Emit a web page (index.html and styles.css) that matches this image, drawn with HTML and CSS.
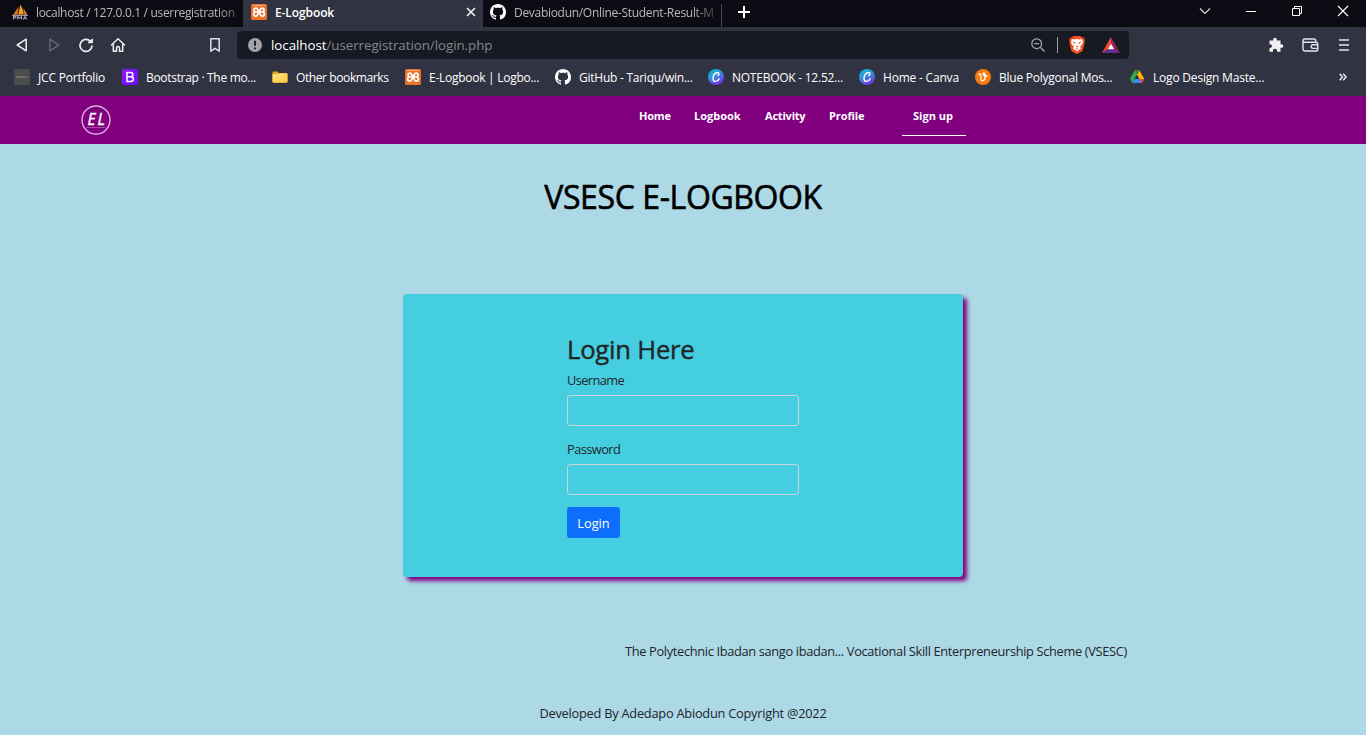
FILE: index.html
```html
<!DOCTYPE html>
<html lang="en">
<head>
<meta charset="utf-8">
<title>E-Logbook</title>
<link rel="stylesheet" href="styles.css">
</head>
<body>
<svg class="defs" width="0" height="0" aria-hidden="true">
  <defs>
    <linearGradient id="canva-fill" x1="0.2" y1="0" x2="0.7" y2="1">
      <stop offset="0" stop-color="#00c4cc"/><stop offset="0.5" stop-color="#3e84df"/><stop offset="1" stop-color="#7d2ae8"/>
    </linearGradient>
    <linearGradient id="boot-fill" x1="0" y1="0" x2="1" y2="1">
      <stop offset="0" stop-color="#9013fe"/><stop offset="1" stop-color="#6610f2"/>
    </linearGradient>
    <linearGradient id="folder-fill" x1="0" y1="0" x2="1" y2="1">
      <stop offset="0" stop-color="#ffe384"/><stop offset="1" stop-color="#fbcb3e"/>
    </linearGradient>
    <symbol id="xampp" viewBox="0 0 16 16">
      <rect width="16" height="16" rx="1.6" fill="#e9712a"/>
      <path d="M2 1.500h12" stroke="#f6c3a4" stroke-width=".8" stroke-dasharray="1.200 .6 8.400 .6"/>
      <path d="M5.400 4.200C3.800 4.200 3 5 3 6.100S3.700 8 4.600 8C3.600 8 2.600 8.700 2.600 10s1 2.200 2.100 2.200 1.600-.6 1.900-1.500l2.800-5.200c.4-.8.800-1.300 1.700-1.300 1.300 0 1.900.9 1.900 1.900S12.300 8 11.400 8c1 0 2 .7 2 2s-1 2.200-2.100 2.200-1.600-.6-1.900-1.500L6.600 5.500c-.3-.8-.6-1.300-1.200-1.300zM4.600 8h6.800" fill="none" stroke="#fff" stroke-width="1.700" stroke-linejoin="round"/>
    </symbol>
    <symbol id="github" viewBox="0 0 16 16">
      <path fill="#fff" d="M8 0C3.580 0 0 3.580 0 8c0 3.540 2.290 6.530 5.470 7.590.4.070.55-.17.55-.38 0-.19-.01-.82-.01-1.490-2.010.37-2.530-.49-2.690-.94-.09-.23-.48-.94-.82-1.130-.28-.15-.68-.52-.01-.53.63-.01 1.080.58 1.230.82.72 1.210 1.870.87 2.330.66.070-.52.280-.87.510-1.070-1.780-.2-3.640-.89-3.640-3.950 0-.87.310-1.590.82-2.150-.08-.2-.36-1.020.08-2.120 0 0 .67-.21 2.200.82.640-.18 1.320-.27 2-.27s1.360.09 2 .27c1.530-1.040 2.200-.82 2.200-.82.44 1.100.16 1.920.08 2.120.51.56.82 1.270.82 2.150 0 3.070-1.870 3.750-3.650 3.950.29.25.54.73.54 1.480 0 1.070-.01 1.930-.01 2.200 0 .21.15.46.55.38A8.010 8.010 0 0 0 16 8c0-4.420-3.580-8-8-8z"/>
    </symbol>
    <symbol id="canva" viewBox="0 0 16 16">
      <circle cx="8" cy="8" r="8" fill="url(#canva-fill)"/>
      <path d="M9.900 6.500c1.300-.4 1.600-3-.5-3C7.200 3.500 5 6.400 5 9.200c0 1.900.9 3.200 2.400 3.200s2.900-1.100 3.700-2.600" fill="none" stroke="#fff" stroke-width="1.400" stroke-linecap="round"/>
    </symbol>
  </defs>
</svg>

<div class="browser">
  <div class="tabstrip">
    <div class="tab tab-first">
      <svg class="ic16" viewBox="0 0 16 16"><path d="M1 11 6.300 2.800l-.1 8z" fill="#c9781b"/><path d="M6.300 10.800 8.300.5c1.500 3 3.700 6.300 3.700 10z" fill="#f59b20"/><path d="M11.500 4.500c1.600 1.700 3 4 3.500 6.500h-2.700z" fill="#dd871d"/><path d="M6.300 3v8M11.700 5v6" stroke="#5d4230" stroke-width=".7"/><path d="M0 11.500h16M1.500 15.500v-3h2.300v1.500H1.500M5.700 15.500v-3l1.900 1.700 1.900-1.700v3M11.200 15.500l1.800-3 1.800 3M11.500 14.500h3" fill="none" stroke="#9696b5" stroke-width="1.200"/></svg>
      <span class="tab-title t-local">localhost / 127.0.0.1 / userregistration</span>
    </div>
    <div class="tab tab-active">
      <svg class="ic16"><use href="#xampp"/></svg>
      <span class="tab-title t-elog">E-Logbook</span>
      <svg class="tab-close" viewBox="0 0 10 10"><path d="M1 1l8 8M9 1 1 9" stroke="#f2f2f4" stroke-width="1.600"/></svg>
    </div>
    <div class="tab tab-last">
      <svg class="ic16"><use href="#github"/></svg>
      <span class="tab-title t-dev">Devabiodun/Online-Student-Result-M</span>
    </div>
    <svg class="newtab" viewBox="0 0 12 12"><path d="M6 0v12M0 6h12" stroke="#fff" stroke-width="2"/></svg>
    <div class="window-controls">
      <svg width="12" height="12" viewBox="0 0 12 12"><path d="M1 3.500l5 5 5-5" fill="none" stroke="#d8d8dc" stroke-width="1.200"/></svg>
      <svg width="12" height="12" viewBox="0 0 12 12"><path d="M1 6.500h10" stroke="#fff"/></svg>
      <svg width="12" height="12" viewBox="0 0 12 12"><path d="M1.500 3.500h7v7h-7zM3.500 3.500v-2h7v7h-2" fill="none" stroke="#fff"/></svg>
      <svg width="12" height="12" viewBox="0 0 12 12"><path d="M1 1l10 10M11 1 1 11" stroke="#fff" stroke-width="1.100"/></svg>
    </div>
  </div>

  <div class="toolbar">
    <div class="nav-buttons">
      <svg width="16" height="16" viewBox="0 0 16 16"><path d="M12.200 2.200v11.600L3.200 8z" fill="none" stroke="#ededf0" stroke-width="1.500" stroke-linejoin="round"/></svg>
      <svg width="16" height="16" viewBox="0 0 16 16"><path d="M3.800 2.200v11.600L12.800 8z" fill="none" stroke="#6c6d79" stroke-width="1.400" stroke-linejoin="round"/></svg>
      <svg width="16" height="16" viewBox="0 0 16 16"><path d="M12.300 4.200A6 6 0 1 0 14 9" fill="none" stroke="#ededf0" stroke-width="1.700" stroke-linecap="round"/><path d="M10 5.700h4.500V2z" fill="#ededf0" stroke="#ededf0" stroke-linejoin="round"/></svg>
      <svg width="16" height="16" viewBox="0 0 16 16"><path d="M1.500 8 8 1.800 14.500 8M3.300 6.700v7.600h3.200V11a1.500 1.500 0 0 1 3 0v3.300h3.200V6.700" fill="none" stroke="#ededf0" stroke-width="1.500" stroke-linejoin="round" stroke-linecap="round"/></svg>
    </div>
    <svg class="bookmark-btn" viewBox="0 0 16 16"><path d="M3.800 1.700h8.400v12.500L8 11.300l-4.200 2.900z" fill="none" stroke="#e0e0e4" stroke-width="1.500" stroke-linejoin="round"/></svg>
    <div class="address">
      <svg class="info" viewBox="0 0 14 14"><circle cx="7" cy="7" r="7" fill="#a2a3ab"/><path d="M7 2.800v5M7 9.400v1.900" stroke="#171a22" stroke-width="1.900"/></svg>
      <span class="url"><b>localhost</b>/userregistration/login.php</span>
      <svg class="zoomic" viewBox="0 0 14 14"><circle cx="5.700" cy="5.700" r="4.900" fill="none" stroke="#a7a8ae" stroke-width="1.200"/><path d="M3.300 5.700h4.800M9.300 9.300l4.200 4.200" stroke="#a7a8ae" stroke-width="1.300"/></svg>
      <i class="divider"></i>
      <svg class="brave" viewBox="0 0 16 18"><path d="M4.500 0h7l1.500 1.500 1.700-.1L16 4.300l-.7 1.600.3 1.400L13.800 14c-.3 1.100-1 1.700-5.800 4-4.800-2.300-5.500-2.900-5.800-4L.4 7.300l.3-1.400L0 4.300l1.300-2.900 1.700.1z" fill="#f4511e"/><path d="M3.500 3l2.300.4L8 2.800l2.200.6 2.300-.4 1.500 2.200-.5 2.600-2.400 3 .8 1.800L8 15.500l-3.900-2.900.8-1.800-2.400-3L2 5.200z" fill="#fff"/><path d="M4.200 6l2 .8-.6.900zM11.800 6l-2 .8.6.9zM6.600 10 8 11.200 9.400 10M6.800 13.200 8 12.500l1.200.7" fill="#f4511e" stroke="#f4511e" stroke-width=".6"/></svg>
      <svg class="bat" viewBox="0 0 18 16"><path d="M9 0 0 16l6-4 3-5.500z" fill="#ff4724"/><path d="M9 0l9 16-6-4-3-5.500z" fill="#9e1f63"/><path d="M0 16h18l-6-4H6z" fill="#662d91"/><path d="M9 6.500 5.800 12.200h6.400z" fill="#fff"/></svg>
    </div>
    <div class="actions">
      <svg width="16" height="16" viewBox="0 0 16 16"><path d="M1.500 3.600h3.800C4.800 1.900 5.600.8 7 .8s2.200 1.100 1.700 2.800h3.800v3.700c1.700-.5 2.800.3 2.800 1.700s-1.100 2.200-2.800 1.700v4H9c.3-1.800-.5-2.900-2-2.900s-2.300 1.100-2 2.900H1.500v-3.800c1.600.2 2.500-.6 2.500-1.800s-.9-2-2.500-1.800z" fill="#efeff1"/></svg>
      <svg width="17" height="14" viewBox="0 0 17 14"><path d="M1 2.500v8.300C1 12.500 1.700 13 3 13h11c1.300 0 1.800-.7 1.800-1.800V5.800c0-1-.6-1.600-1.800-1.600H2.600C.5 4.200.5 1 2.600 1H12c1.200 0 1.800.6 1.800 1.800v1.300M15.800 6.800H11a1.800 1.800 0 0 0 0 3.600h4.800" fill="none" stroke="#e3e3e7" stroke-width="1.400"/></svg>
      <svg width="10" height="12" viewBox="0 0 10 12"><path d="M0 1h10M0 6h10M0 11h10" stroke="#e5e5e8" stroke-width="1.600"/></svg>
    </div>
  </div>

  <div class="bookmarks">
    <div class="bm bm-jcc"><svg class="ic16" viewBox="0 0 16 16"><path d="M0 0h16v16H0z" fill="#4b4c4c"/><path d="M2.500 8h11" stroke="#7b7d7b" stroke-width="2" stroke-dasharray="1.500 .6"/></svg><span>JCC Portfolio</span></div>
    <div class="bm bm-boot"><svg class="ic16" viewBox="0 0 16 16"><rect width="16" height="16" rx="2" fill="url(#boot-fill)"/><path d="M5 3.500h3.600c3 0 3 4.200 0 4.200H5h3.800c3.500 0 3.500 4.800 0 4.800H5z" fill="none" stroke="#fff" stroke-width="1.500"/></svg><span>Bootstrap · The mo...</span></div>
    <div class="bm bm-other"><svg class="ic16" viewBox="0 0 16 16"><path d="M.5 3.500q0-1 1-1h4l1.500 1.700h7.500q1 0 1 1v7.600q0 1-1 1h-13q-1 0-1-1z" fill="#e4a82b"/><path d="M.5 5h6l1.500-.8h6.500q1 0 1 1v7.400q0 .9-1 .9h-13q-1 0-1-.9z" fill="url(#folder-fill)"/></svg><span>Other bookmarks</span></div>
    <div class="bm bm-elog"><svg class="ic16"><use href="#xampp"/></svg><span>E-Logbook | Logbo...</span></div>
    <div class="bm bm-git"><svg class="ic16"><use href="#github"/></svg><span>GitHub - Tariqu/win...</span></div>
    <div class="bm bm-note"><svg class="ic16"><use href="#canva"/></svg><span>NOTEBOOK - 12.52...</span></div>
    <div class="bm bm-canva"><svg class="ic16"><use href="#canva"/></svg><span>Home - Canva</span></div>
    <div class="bm bm-blue"><svg class="ic16" viewBox="0 0 16 16"><circle cx="8" cy="8" r="8" fill="#fb7a0c"/><path d="M3.800 5.400c1.400-.7 2.100-.2 2.100 1.300v3c0 3.300 4.300 2.300 4.300-2 0-2.200-.4-3.700-1.400-3.700-1.600 0-.8 3.500 3.400 2.900" fill="none" stroke="#fff" stroke-width="1.300" stroke-linecap="round"/></svg><span>Blue Polygonal Mos...</span></div>
    <div class="bm bm-drive"><svg class="ic16" viewBox="0 0 16 16"><path d="M5.500 1.500h5L5.700 10l-2.500 4L.9 10z" fill="#2da94f"/><path d="M5.500 1.500h5l4.800 8.500h-5z" fill="#ffba00"/><path d="M5.500 1.500h5L8 5.800z" fill="#188038"/><path d="M5.700 10h9.600l-2.500 4H3.200z" fill="#4285f4"/><path d="M10.300 10h5l-2.500 4z" fill="#ea4335"/><path d="M8 5.800 5.700 10h4.600z" fill="#313342"/></svg><span>Logo Design Maste...</span></div>
    <svg class="more" width="8" height="8" viewBox="0 0 8 8"><path d="M.7.7 3.500 4 .7 7.300M4.200.7 7 4 4.200 7.300" fill="none" stroke="#eee" stroke-width="1.400"/></svg>
  </div>
</div>

<div class="page">
  <header class="site-nav">
    <svg class="logo" viewBox="0 0 30 30"><circle cx="15" cy="15" r="14" fill="none" stroke="#dcaedc" stroke-width="1.400"/><text x="6.500" y="20.300" class="logo-text" textLength="17.500">EL</text><path d="M5.500 22.500h19" stroke="#b06ab0" stroke-width="1.200" stroke-dasharray="1.300 .5"/></svg>
    <nav class="links">
      <a class="l-home">Home</a><a class="l-log">Logbook</a><a class="l-act">Activity</a><a class="l-prof">Profile</a><a class="signup"><span>Sign up</span></a>
    </nav>
  </header>
  <h1>VSESC E-LOGBOOK</h1>
  <main class="card">
    <form class="login">
      <h2>Login Here</h2>
      <label class="lb-user" for="user">Username</label>
      <input id="user" type="text">
      <label class="lb-pass" for="pass">Password</label>
      <input id="pass" type="password">
      <button type="button">Login</button>
    </form>
  </main>
  <footer>
    <p class="school">The Polytechnic Ibadan sango ibadan... Vocational Skill Enterpreneurship Scheme (VSESC)</p>
    <p class="credit">Developed By Adedapo Abiodun Copyright @2022</p>
  </footer>
</div>
</body>
</html>
```

FILE: styles.css
```css
* { box-sizing: border-box; }
body {
  margin: 0;
  width: 1366px;
  height: 735px;
  overflow: hidden;
  font-family: "Open Sans", "Noto Sans", sans-serif;
  white-space: nowrap;
  background: #add8e6;
}
svg { display: block; flex: none; }
.defs { position: absolute; }
.ic16 { width: 16px; height: 16px; }

/* browser chrome */
.browser { height: 96px; background: #313342; color: #fff; }
.tabstrip { display: flex; height: 27px; background: #0b0b13; }
.tab { display: flex; align-items: center; height: 27px; padding-bottom: 3px; font-size: 12px; color: #b9b9bd; }
.tab-first { width: 243px; padding-left: 12px; gap: 8px; }
.tab-active { width: 240px; padding-left: 8px; gap: 8px; background: #313342; color: #fff; font-weight: 600; }
.tab-last { width: 239px; padding-left: 7px; gap: 8px; background: linear-gradient(#45464e, #45464e) right bottom / 1px 23px no-repeat; }
.tab-title { line-height: 16px; margin-top: 1px; }
.t-local { width: 201px; letter-spacing: -0.32px; -webkit-mask-image: linear-gradient(90deg, #000 90%, rgba(0,0,0,.4)); }
.t-elog { width: 184px; letter-spacing: -0.1px; }
.t-dev { width: 203px; letter-spacing: -0.3px; -webkit-mask-image: linear-gradient(90deg, #000 88%, rgba(0,0,0,.15)); }
.tab-close { width: 10px; height: 10px; margin-left: -1px; }
.newtab { width: 12px; height: 12px; margin: 6px 0 0 16px; }
.window-controls { display: flex; gap: 34px; margin: 5px 17px 0 auto; }

.toolbar { display: flex; align-items: center; height: 36px; }
.nav-buttons { display: flex; gap: 16px; margin-left: 14px; }
.bookmark-btn { width: 16px; height: 16px; margin-left: 81px; }
.address { display: flex; align-items: center; width: 892px; height: 28px; margin-left: 14px; padding-left: 11px; border-radius: 4px; background: #171a22; }
.info { width: 14px; height: 14px; }
.url { width: 769px; margin-left: 9px; font-size: 13.3px; color: #85878d; letter-spacing: -0.03px; }
.url b { font-weight: 400; color: #fff; }
.zoomic { width: 14px; height: 14px; margin-left: -9px; }
.divider { width: 1px; height: 16px; margin-left: 12px; background: #9c9da3; }
.brave { width: 16px; height: 18px; margin-left: 11px; }
.bat { width: 18px; height: 16px; margin-left: 17px; }
.actions { display: flex; align-items: center; gap: 18px; margin-left: 139px; }
.actions svg:last-child { margin-left: 2px; }

.bookmarks { display: flex; align-items: center; height: 28px; padding-left: 14px; font-size: 12px; color: #fff; }
.bm { display: flex; flex: none; align-items: center; gap: 8px; letter-spacing: -0.25px; }
.bm-jcc { width: 108px; letter-spacing: -0.2px; }
.bm-boot { width: 150px; letter-spacing: -0.31px; }
.bm-other { width: 133px; letter-spacing: -0.4px; }
.bm-elog { width: 150px; letter-spacing: -0.27px; }
.bm-git { width: 153px; }
.bm-note { width: 151px; }
.bm-canva { width: 116px; letter-spacing: -0.2px; }
.bm-blue { width: 154px; }
.bm-drive { width: 150px; letter-spacing: -0.2px; }
.more { margin-left: 60px; }

/* site */
.page { display: flex; flex-direction: column; height: 639px; background: #add8e6; color: #212529; }
.site-nav { display: flex; height: 48px; background: #800080; }
.logo { width: 30px; height: 30px; margin: 9px 0 0 81px; }
.logo-text { font: italic 500 15.5px "Open Sans", sans-serif; fill: #fff; stroke: #fff; stroke-width: 0.35px; }
.links { display: flex; align-items: flex-start; margin-left: 528px; font-size: 11px; font-weight: 700; line-height: 16px; color: #fff; padding-top: 12px; }
.l-home { width: 55px; letter-spacing: -0.2px; }
.l-log { width: 71px; letter-spacing: 0; }
.l-act { width: 64px; letter-spacing: -0.2px; }
.l-prof { width: 73px; letter-spacing: -0.1px; }
.signup { width: 64px; height: 28px; padding-left: 11px; border-bottom: 1px solid #fff; letter-spacing: 0; }
h1 { margin: 33px 0 0; height: 40px; line-height: 39px; text-align: center; font-size: 32px; font-weight: 500; letter-spacing: -0.4px; color: #000; -webkit-text-stroke: 0.6px #000; }
.card { width: 560px; height: 283px; margin: 77px 0 0 403px; padding: 40px 164px; border-radius: 4px; background: #45cee0; box-shadow: 4px 4px 4px #800080; }
.login { display: flex; flex-direction: column; align-items: flex-start; }
h2 { margin: 0; height: 31px; line-height: 31px; font-size: 25.6px; font-weight: 500; letter-spacing: -0.2px; -webkit-text-stroke: 0.4px #212529; }
label { font-size: 12.8px; line-height: 20px; }
.lb-user { margin-top: 5px; margin-bottom: 1px; letter-spacing: -0.6px; }
.lb-pass { margin-top: 13px; margin-bottom: 1px; letter-spacing: -0.55px; }
input { width: 232px; height: 31px; margin: 4px 0 0; border: 1px solid #ced4da; border-radius: 3.200px; background: transparent; outline: none; }
button { width: 53px; height: 31px; margin: 12px 0 0; padding: 0; border: 0; border-radius: 3.200px; background: #0d6efd; color: #fff; font: 12.8px "Open Sans", sans-serif; }
footer { font-size: 12.8px; line-height: 20px; }
p { margin: 0; }
.school { margin: 64px 0 0 625px; letter-spacing: -0.33px; }
.credit { margin: 42px 0 0; text-align: center; letter-spacing: -0.24px; }
```
